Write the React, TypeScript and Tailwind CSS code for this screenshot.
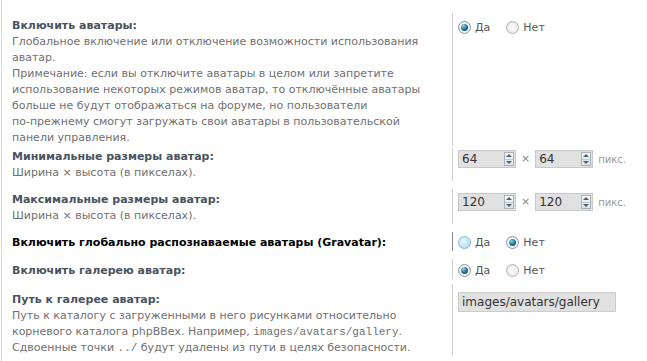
import React from "react";

type RadioState = "on" | "off" | "hover";

const Radio = ({ state }: { state: RadioState }) => {
  if (state === "on") {
    return (
      <span className="relative inline-block w-[13px] h-[13px] rounded-full border border-[#8a97a0] bg-[radial-gradient(circle_at_50%_50%,#ffffff_45%,#d5dadf)]">
        <span className="absolute left-[2px] top-[2px] w-[7px] h-[7px] rounded-full bg-[radial-gradient(circle_at_35%_30%,#8fd3ea,#1d6f8f_55%,#0b3c55)]" />
      </span>
    );
  }
  if (state === "hover") {
    return (
      <span className="inline-block w-[13px] h-[13px] rounded-full border border-[#7fb8d8] bg-[radial-gradient(circle_at_40%_35%,#eaf7fd,#b6e0f4_70%,#9ccfe9)]" />
    );
  }
  return (
    <span className="inline-block w-[13px] h-[13px] rounded-full border border-[#b4b4b4] bg-[radial-gradient(circle_at_50%_50%,#f7f7f7_35%,#dcdcdc)]" />
  );
};

const YesNo = ({ yes, no }: { yes: RadioState; no: RadioState }) => (
  <div className="flex items-center text-[11px] leading-[13px] text-[#555]">
    <Radio state={yes} />
    <span className="ml-[4px]">Да</span>
    <span className="ml-[16px]" />
    <Radio state={no} />
    <span className="ml-[4px]">Нет</span>
  </div>
);

const Spinner = () => (
  <div className="flex flex-col w-[10px] h-[14px] border border-[#a9b3bb] bg-[linear-gradient(#f6f8f9,#dde3e7)]">
    <div className="flex-1 flex items-center justify-center border-b border-[#c2cad0]">
      <span className="w-0 h-0 border-l-[3px] border-r-[3px] border-b-[3px] border-l-transparent border-r-transparent border-b-[#4d6170]" />
    </div>
    <div className="flex-1 flex items-center justify-center">
      <span className="w-0 h-0 border-l-[3px] border-r-[3px] border-t-[3px] border-l-transparent border-r-transparent border-t-[#4d6170]" />
    </div>
  </div>
);

const NumBox = ({ value }: { value: string }) => (
  <div className="flex items-center justify-between w-[58px] h-[18px] bg-[#e1e1e1] border border-[#c8c8c8] pl-[3px] pr-[1px]">
    <span className="text-[12px] text-[#333]">{value}</span>
    <Spinner />
  </div>
);

const Sizes = ({ value }: { value: string }) => (
  <div className="flex items-center">
    <NumBox value={value} />
    <span className="mx-[5px] text-[11px] text-[#888]">×</span>
    <NumBox value={value} />
    <span className="ml-[5px] text-[10px] text-[#9a9a9a]">пикс.</span>
  </div>
);

const Row = ({
  title,
  lines = [],
  children,
  dark = false,
  rowClass,
  valueClass,
}: {
  title: string;
  lines?: React.ReactNode[];
  children: React.ReactNode;
  dark?: boolean;
  rowClass: string;
  valueClass: string;
}) => (
  <div className={`flex ${rowClass}`}>
    <div className="w-[450px] pl-[10px] text-[11px] leading-[16px] whitespace-nowrap">
      <div className={`font-bold ${dark ? "text-black" : "text-[#4a5360]"}`}>{title}</div>
      {lines.map((l, i) => (
        <div key={i} className="text-[#707070]">
          {l}
        </div>
      ))}
    </div>
    <div className={`flex-1 border-l ${dark ? "border-[#8c8c8c]" : "border-[#d0d0d0]"} pl-[5px] ${valueClass}`}>
      {children}
    </div>
  </div>
);

const mono = "font-['Liberation_Mono',monospace]";

export default function App() {
  return (
    <div className="w-[647px] h-[361px] overflow-hidden bg-white font-['DejaVu_Sans',Verdana,sans-serif]">
      <div className="ml-[1px] h-full border-l border-[#d9d9d9] pt-[13px]">
        <Row
          title="Включить аватары:"
          lines={[
            "Глобальное включение или отключение возможности использования",
            "аватар.",
            "Примечание: если вы отключите аватары в целом или запретите",
            "использование некоторых режимов аватар, то отключённые аватары",
            "больше не будут отображаться на форуме, но пользователи",
            "по-прежнему смогут загружать свои аватары в пользовательской",
            "панели управления.",
          ]}
          rowClass="pt-[5px] pb-[0px]"
          valueClass="-mt-[5px] pt-[8px]"
        >
          <YesNo yes="on" no="off" />
        </Row>

        <Row
          title="Минимальные размеры аватар:"
          lines={["Ширина × высота (в пикселах)."]}
          rowClass="mt-[2px] pt-[1px] pb-[3px]"
          valueClass="-mt-[1px] pt-[2px]"
        >
          <Sizes value="64" />
        </Row>

        <Row
          title="Максимальные размеры аватар:"
          lines={["Ширина × высота (в пикселах)."]}
          rowClass="mt-[5px] pt-[3px] pb-[3px]"
          valueClass="-mt-[3px] pt-[4px]"
        >
          <Sizes value="120" />
        </Row>

        <Row
          title="Включить глобально распознаваемые аватары (Gravatar):"
          dark
          rowClass="mt-[5px] pt-[3px] pb-[3px]"
          valueClass="-mt-[3px] pt-[4px]"
        >
          <YesNo yes="hover" no="on" />
        </Row>

        <Row
          title="Включить галерею аватар:"
          rowClass="mt-[5px] pt-[4px] pb-[0px]"
          valueClass="-mt-[4px] pt-[5px]"
        >
          <YesNo yes="on" no="off" />
        </Row>

        <Row
          title="Путь к галерее аватар:"
          lines={[
            "Путь к каталогу с загруженными в него рисунками относительно",
            <>
              корневого каталога phpBBex. Например, <span className={mono}>images/avatars/gallery</span>.
            </>,
            <>
              Сдвоенные точки <span className={mono}>../</span> будут удалены из пути в целях безопасности.
            </>,
          ]}
          rowClass="mt-[5px] pt-[8px] pb-[2px]"
          valueClass="-mt-[8px] pt-[8px]"
        >
          <div className="w-[158px] h-[20px] bg-[#e1e1e1] border border-[#cbcbcb] pl-[3px] text-[12px] leading-[18px] text-[#333]">
            images/avatars/gallery
          </div>
        </Row>
      </div>
    </div>
  );
}
